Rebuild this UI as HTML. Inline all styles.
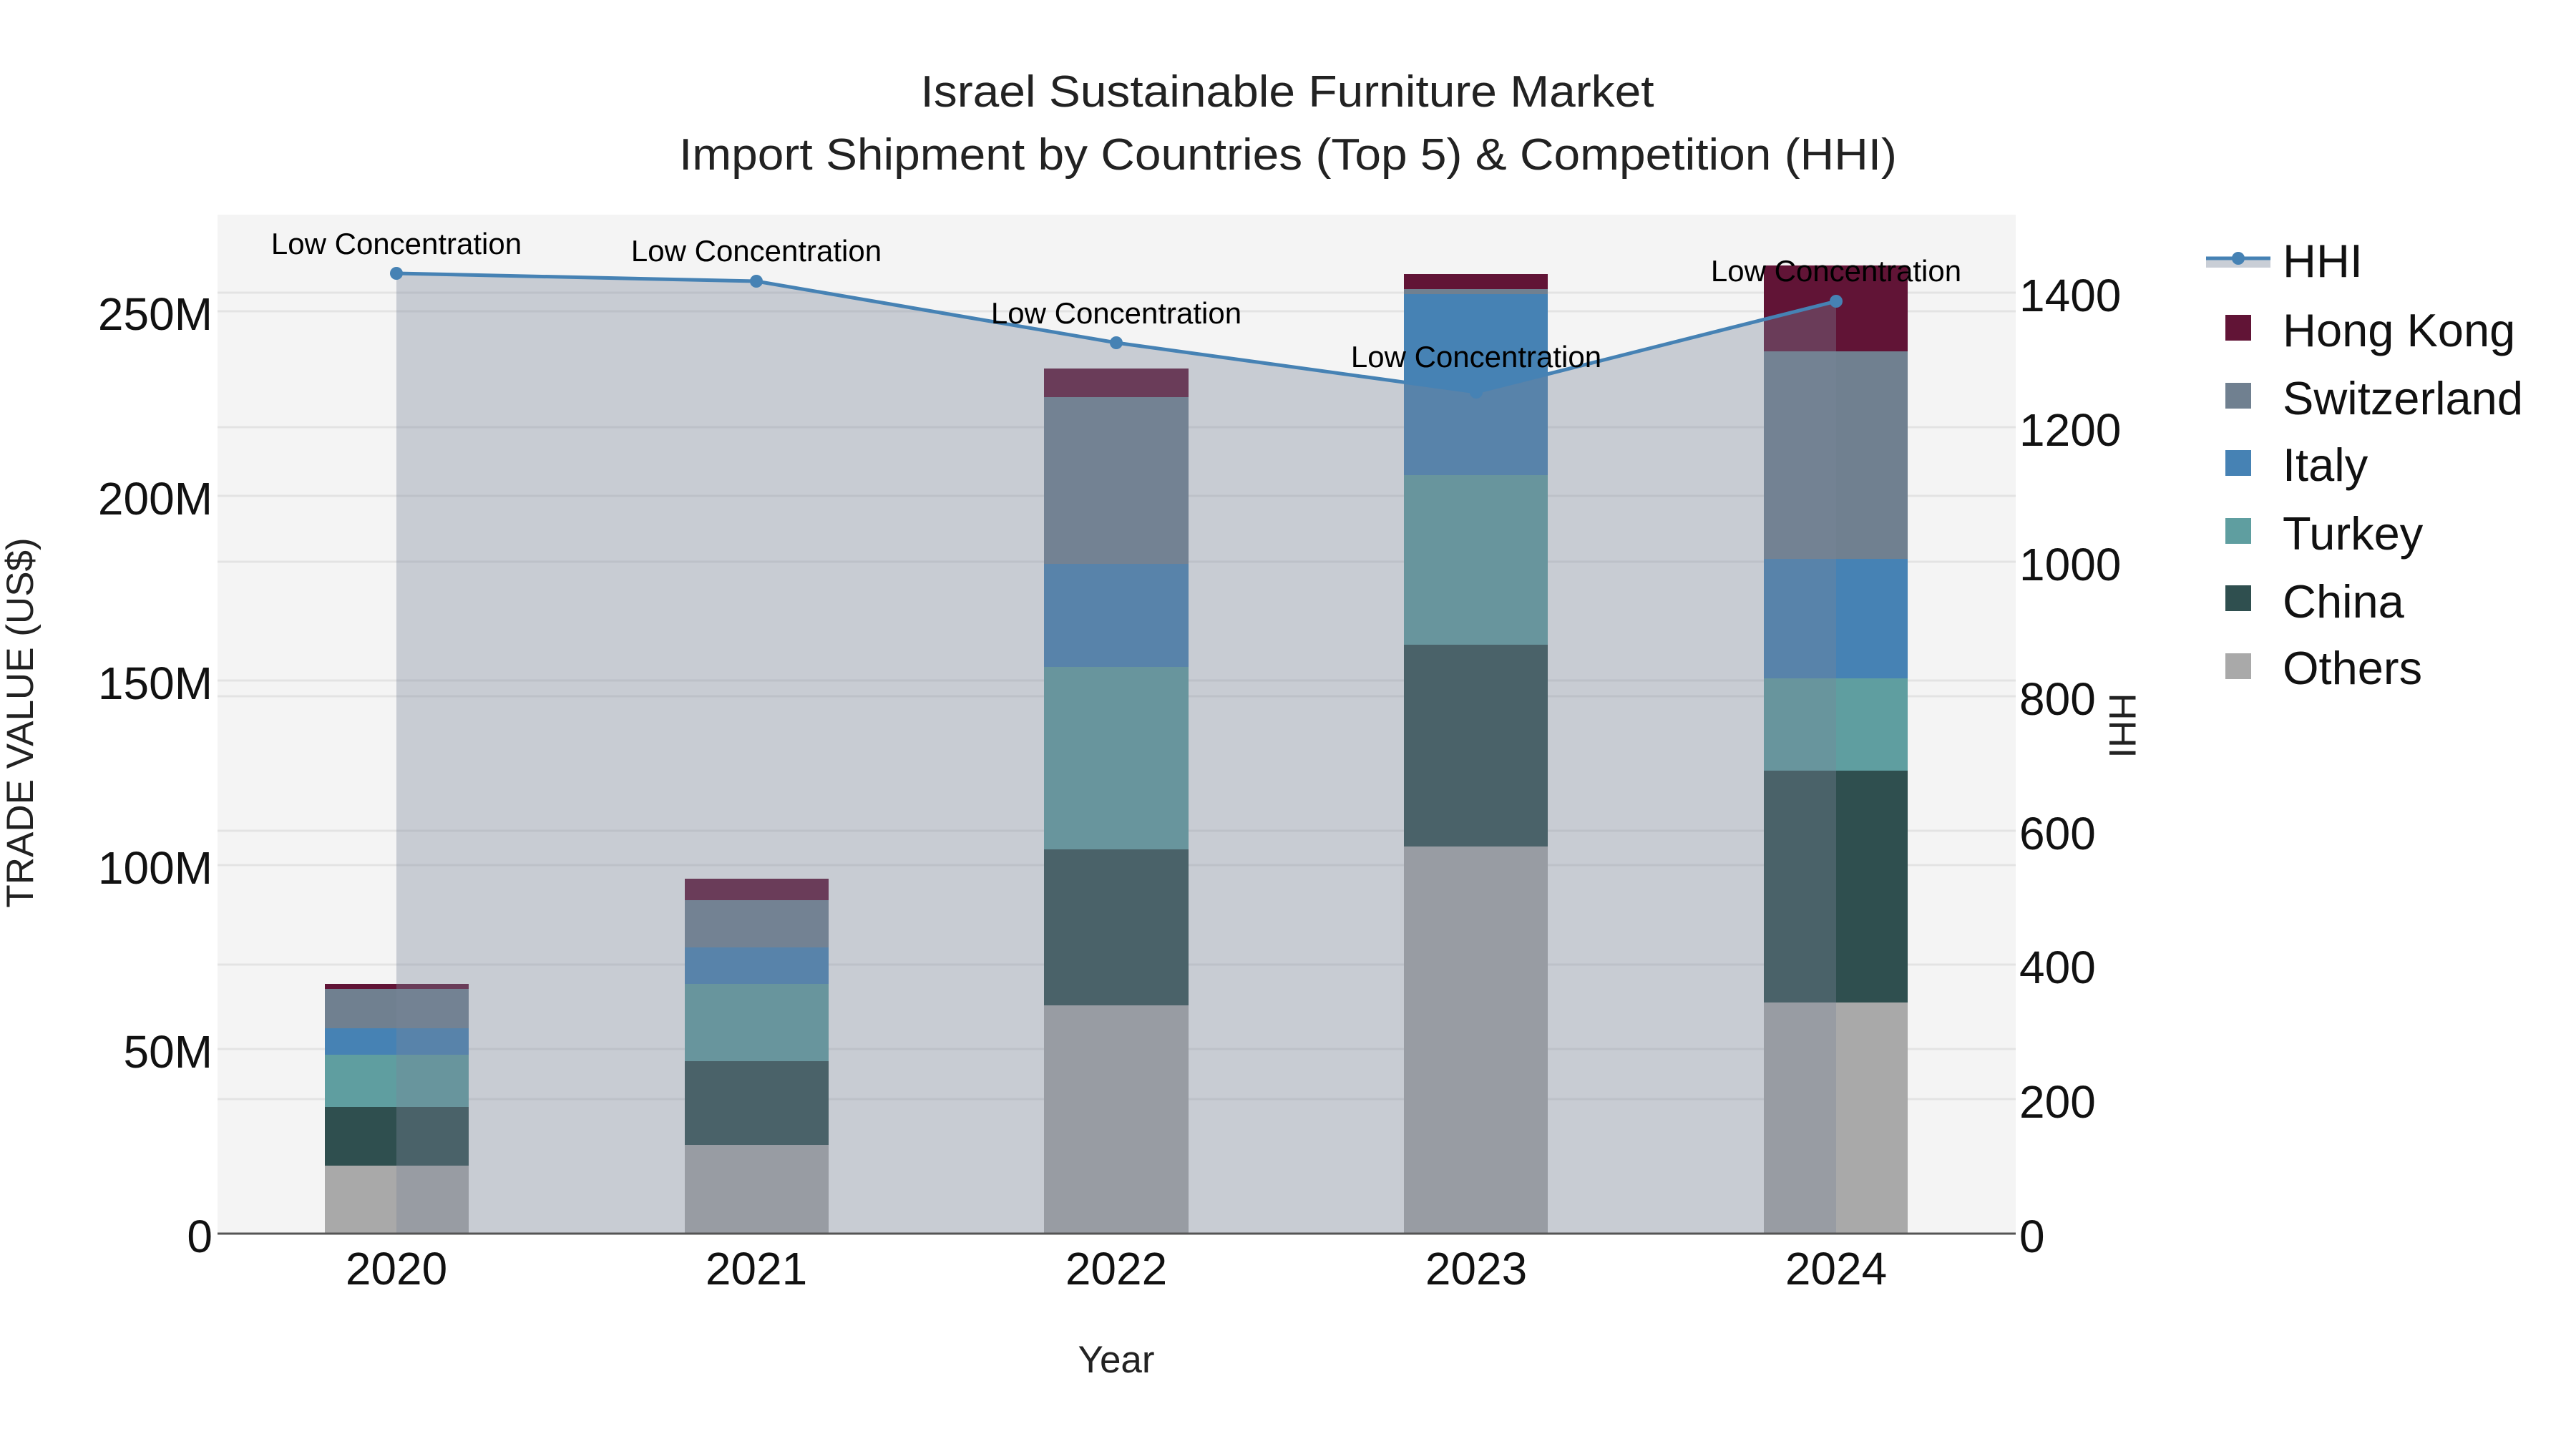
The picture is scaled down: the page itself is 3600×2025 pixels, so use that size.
<!DOCTYPE html>
<html><head><meta charset="utf-8"><style>html,body{margin:0;padding:0;background:#fff}svg{display:block}</style></head>
<body>
<svg width="3600" height="2025" viewBox="0 0 3600 2025" xmlns="http://www.w3.org/2000/svg" font-family="Liberation Sans, Arial, sans-serif">
<rect x="0" y="0" width="3600" height="2025" fill="#fff"/>
<rect x="304" y="300" width="2513" height="1424" fill="#f4f4f4"/>
<g stroke="#e3e3e3" stroke-width="3">
<line x1="304" x2="2817" y1="435" y2="435"/><line x1="304" x2="2817" y1="693" y2="693"/><line x1="304" x2="2817" y1="951" y2="951"/><line x1="304" x2="2817" y1="1209" y2="1209"/><line x1="304" x2="2817" y1="1466" y2="1466"/>
<line x1="304" x2="2817" y1="409" y2="409"/><line x1="304" x2="2817" y1="597" y2="597"/><line x1="304" x2="2817" y1="785" y2="785"/><line x1="304" x2="2817" y1="973" y2="973"/><line x1="304" x2="2817" y1="1161" y2="1161"/><line x1="304" x2="2817" y1="1348" y2="1348"/><line x1="304" x2="2817" y1="1536" y2="1536"/>
</g>
<g>
<rect x="454" y="1629" width="201" height="95" fill="#a9a9a9"/>
<rect x="454" y="1547" width="201" height="82" fill="#2f4f4f"/>
<rect x="454" y="1474" width="201" height="73" fill="#5f9ea0"/>
<rect x="454" y="1437" width="201" height="37" fill="#4682b4"/>
<rect x="454" y="1382" width="201" height="55" fill="#708090"/>
<rect x="454" y="1375" width="201" height="7" fill="#611436"/>

<rect x="957" y="1600" width="201" height="124" fill="#a9a9a9"/>
<rect x="957" y="1483" width="201" height="117" fill="#2f4f4f"/>
<rect x="957" y="1375" width="201" height="108" fill="#5f9ea0"/>
<rect x="957" y="1324" width="201" height="51" fill="#4682b4"/>
<rect x="957" y="1258" width="201" height="66" fill="#708090"/>
<rect x="957" y="1228" width="201" height="30" fill="#611436"/>

<rect x="1459" y="1405" width="202" height="319" fill="#a9a9a9"/>
<rect x="1459" y="1187" width="202" height="218" fill="#2f4f4f"/>
<rect x="1459" y="932" width="202" height="255" fill="#5f9ea0"/>
<rect x="1459" y="788" width="202" height="144" fill="#4682b4"/>
<rect x="1459" y="555" width="202" height="233" fill="#708090"/>
<rect x="1459" y="515" width="202" height="40" fill="#611436"/>

<rect x="1962" y="1183" width="201" height="541" fill="#a9a9a9"/>
<rect x="1962" y="901" width="201" height="282" fill="#2f4f4f"/>
<rect x="1962" y="664" width="201" height="237" fill="#5f9ea0"/>
<rect x="1962" y="411" width="201" height="253" fill="#4682b4"/>
<rect x="1962" y="404" width="201" height="7" fill="#708090"/>
<rect x="1962" y="383" width="201" height="21" fill="#611436"/>

<rect x="2465" y="1401" width="201" height="323" fill="#a9a9a9"/>
<rect x="2465" y="1077" width="201" height="324" fill="#2f4f4f"/>
<rect x="2465" y="948" width="201" height="129" fill="#5f9ea0"/>
<rect x="2465" y="781" width="201" height="167" fill="#4682b4"/>
<rect x="2465" y="491" width="201" height="290" fill="#708090"/>
<rect x="2465" y="371" width="201" height="120" fill="#611436"/>
</g>
<polygon points="554,382 1057,393 1560,479 2063,548 2566,421 2566,1724 554,1724" fill="rgb(121,132,152)" fill-opacity="0.36"/>
<line x1="304" x2="2817" y1="1724" y2="1724" stroke="#555" stroke-width="3"/>
<polyline points="554,382 1057,393 1560,479 2063,548 2566,421" fill="none" stroke="#4682b4" stroke-width="5"/>
<g fill="#4682b4"><circle cx="554" cy="382" r="9"/><circle cx="1057" cy="393" r="9"/><circle cx="1560" cy="479" r="9"/><circle cx="2063" cy="548" r="9"/><circle cx="2566" cy="421" r="9"/></g>
<g font-size="42" fill="#000" text-anchor="middle">
<text x="554" y="355">Low Concentration</text>
<text x="1057" y="365">Low Concentration</text>
<text x="1560" y="452">Low Concentration</text>
<text x="2063" y="513">Low Concentration</text>
<text x="2566" y="393">Low Concentration</text>
</g>
<g font-size="64" fill="#111" text-anchor="end">
<text x="297" y="461">250M</text><text x="297" y="719">200M</text><text x="297" y="977">150M</text><text x="297" y="1235">100M</text><text x="297" y="1492">50M</text><text x="297" y="1750">0</text>
</g>
<g font-size="64" fill="#111" text-anchor="start">
<text x="2822" y="435">1400</text><text x="2822" y="623">1200</text><text x="2822" y="811">1000</text><text x="2822" y="999">800</text><text x="2822" y="1187">600</text><text x="2822" y="1374">400</text><text x="2822" y="1562">200</text><text x="2822" y="1750">0</text>
</g>
<g font-size="64" fill="#111" text-anchor="middle">
<text x="554" y="1795">2020</text><text x="1057" y="1795">2021</text><text x="1560" y="1795">2022</text><text x="2063" y="1795">2023</text><text x="2566" y="1795">2024</text>
</g>
<text x="1560" y="1918" font-size="53" text-anchor="middle" fill="#222">Year</text>
<text transform="translate(46,1010) rotate(-90)" font-size="53" text-anchor="middle" fill="#222">TRADE VALUE (US$)</text>
<text transform="translate(2948,1014) rotate(90)" font-size="53" text-anchor="middle" fill="#222">HHI</text>
<g font-size="62" fill="#222" text-anchor="middle">
<text x="1799" y="149" textLength="1025" lengthAdjust="spacingAndGlyphs">Israel Sustainable Furniture Market</text>
<text x="1800" y="237" textLength="1702" lengthAdjust="spacingAndGlyphs">Import Shipment by Countries (Top 5) &amp; Competition (HHI)</text>
</g>
<rect x="3083" y="362" width="90" height="12" fill="#c9ced6"/>
<line x1="3083" x2="3173" y1="361" y2="361" stroke="#4682b4" stroke-width="5"/>
<circle cx="3128" cy="361" r="9" fill="#4682b4"/>
<g font-size="65" fill="#111">
<text x="3190" y="387">HHI</text>
<text x="3190" y="484">Hong Kong</text>
<text x="3190" y="579">Switzerland</text>
<text x="3190" y="672">Italy</text>
<text x="3190" y="768">Turkey</text>
<text x="3190" y="863">China</text>
<text x="3190" y="956">Others</text>
</g>
<rect x="3110" y="440" width="36" height="36" fill="#611436"/>
<rect x="3110" y="535" width="36" height="36" fill="#708090"/>
<rect x="3110" y="629" width="36" height="36" fill="#4682b4"/>
<rect x="3110" y="724" width="36" height="36" fill="#5f9ea0"/>
<rect x="3110" y="818" width="36" height="36" fill="#2f4f4f"/>
<rect x="3110" y="913" width="36" height="36" fill="#a9a9a9"/>
</svg>
</body></html>
